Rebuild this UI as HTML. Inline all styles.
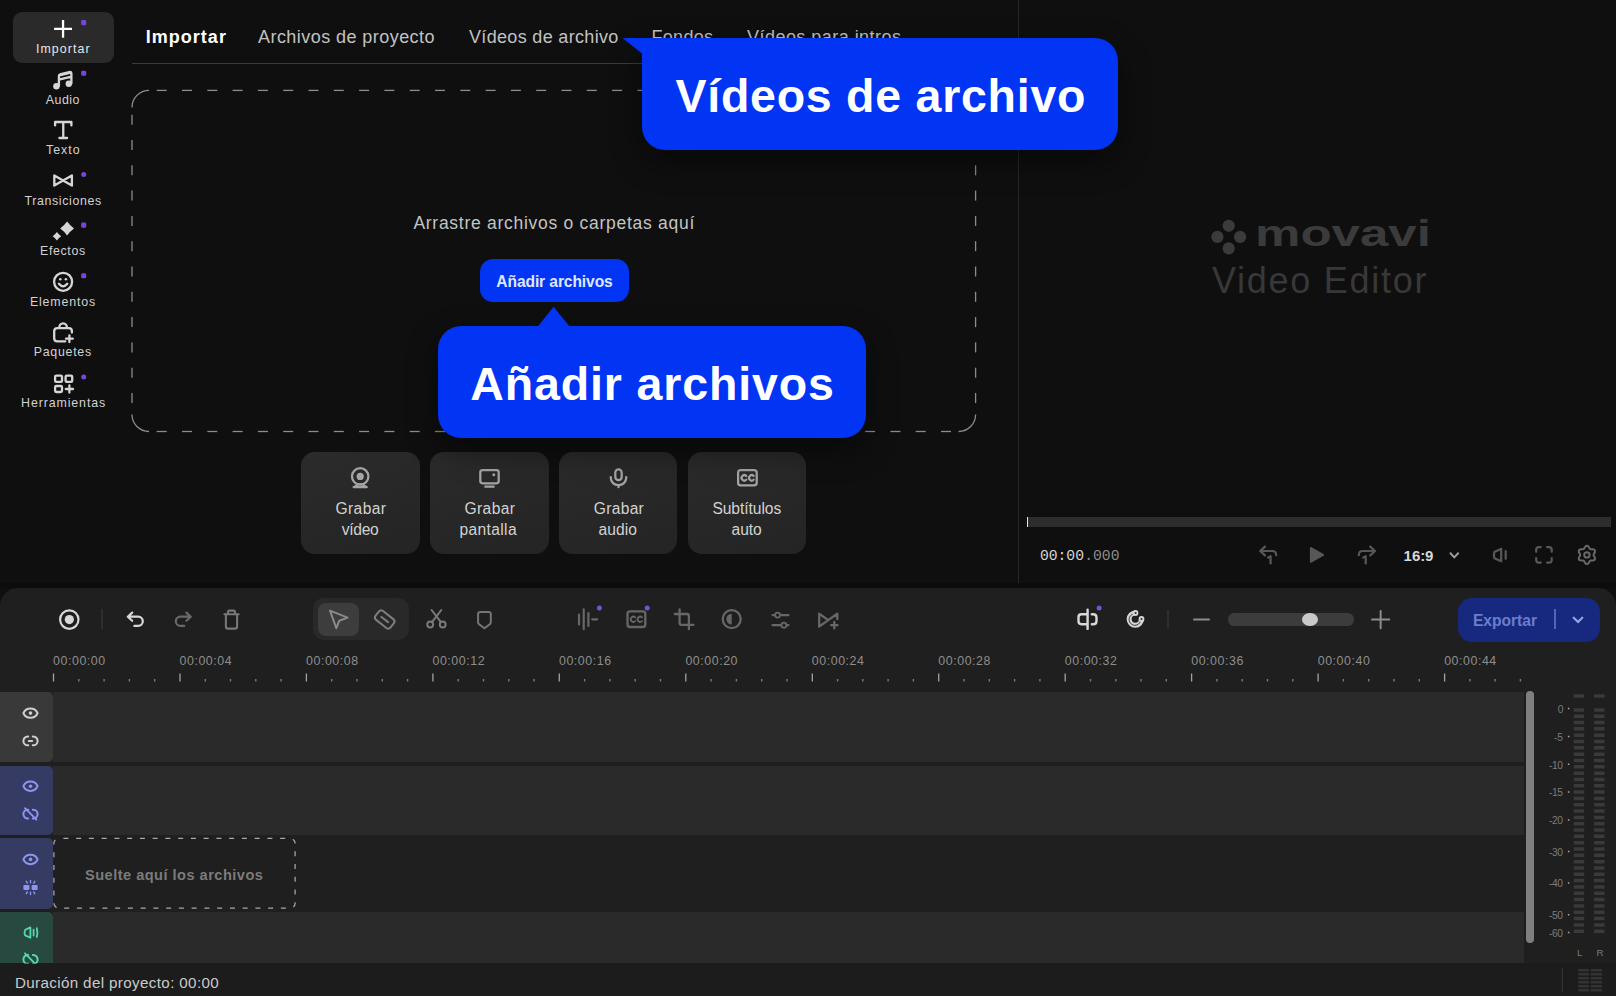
<!DOCTYPE html>
<html lang="es">
<head>
<meta charset="utf-8">
<title>Movavi Video Editor</title>
<style>
*{box-sizing:border-box;margin:0;padding:0}
html,body{width:1616px;height:996px;overflow:hidden;background:#0f0f0f}
body{font-family:"Liberation Sans",sans-serif;position:relative}
.a,.t,svg.i{position:absolute}
.t{white-space:nowrap}
svg{display:block;overflow:visible}
</style>
</head>
<body>
<!-- timeline backgrounds -->
<div class="a" style="left:0px;top:588px;width:1616px;height:408px;background:#1f1f1f;border-radius:18px 18px 0 0;"></div>
<div class="a" style="left:53.4px;top:692.2px;width:1470.4px;height:69.6px;background:#2a2a2a;"></div>
<div class="a" style="left:53.4px;top:765.7px;width:1470.4px;height:69.8px;background:#2a2a2a;"></div>
<div class="a" style="left:53.4px;top:912px;width:1470.4px;height:51.4px;background:#2a2a2a;"></div>
<div class="a" style="left:0px;top:692.2px;width:52.6px;height:69.6px;background:#393939;border-radius:0 5px 5px 0;"></div>
<div class="a" style="left:0px;top:765.7px;width:52.6px;height:69.8px;background:#353b63;border-radius:0 5px 5px 0;"></div>
<div class="a" style="left:0px;top:837.7px;width:52.6px;height:71.2px;background:#353b63;border-radius:0 5px 5px 0;"></div>
<div class="a" style="left:0px;top:912px;width:52.6px;height:51.4px;background:#27493f;border-radius:0 5px 0 0;"></div>
<div class="a" style="left:0px;top:963.4px;width:1616px;height:32.6px;background:#1c1c1c;"></div>
<div class="a" style="left:1526.1px;top:690.8px;width:8px;height:252px;background:#7f7f7f;border-radius:4px;"></div>
<div class="a" style="left:313.4px;top:597.5px;width:96px;height:42.3px;background:#292929;border-radius:11px;"></div>
<div class="a" style="left:318.4px;top:603px;width:40.4px;height:33px;background:#3d3d3d;border-radius:8px;"></div>
<div class="a" style="left:101.4px;top:609.2px;width:1.9px;height:20.1px;background:#2e2e2e;"></div>
<div class="a" style="left:1167px;top:610px;width:1.9px;height:18.3px;background:#2e2e2e;"></div>
<div class="a" style="left:1227.9px;top:613.2px;width:126.2px;height:12.6px;background:#3c3c3c;border-radius:6.3px;"></div>
<div class="a" style="left:1301.9px;top:612.7px;width:15.8px;height:13.6px;background:#c9c9c9;border-radius:50%;"></div>
<div class="a" style="left:1458.1px;top:598px;width:141.7px;height:43.5px;background:#16297f;border-radius:14px;"></div>
<div class="a" style="left:1554.2px;top:609.4px;width:2px;height:19.4px;background:#5165c0;"></div>
<!-- base -->
<div class="a" style="left:0px;top:583px;width:1616px;height:5px;background:#0c0c0c;"></div>
<div class="a" style="left:13px;top:12.4px;width:101px;height:50.6px;background:#2a2a2a;border-radius:9px;"></div>
<div class="a" style="left:131.5px;top:63px;width:887px;height:1px;background:#3b3b3b;"></div>
<div class="a" style="left:1018px;top:0px;width:1.2px;height:583px;background:#282828;"></div>
<div class="t" style="left:145.70px;top:28.00px;font-size:18px;line-height:18px;letter-spacing:1.028px;color:#ffffff;font-weight:bold;">Importar</div>
<div class="t" style="left:258.00px;top:28.00px;font-size:18px;line-height:18px;letter-spacing:0.444px;color:#c2c2c2;">Archivos de proyecto</div>
<div class="t" style="left:469.00px;top:28.00px;font-size:18px;line-height:18px;letter-spacing:0.326px;color:#c2c2c2;">Vídeos de archivo</div>
<div class="t" style="left:651.50px;top:28.00px;font-size:18px;line-height:18px;letter-spacing:0.292px;color:#c2c2c2;">Fondos</div>
<div class="t" style="left:747.00px;top:28.00px;font-size:18px;line-height:18px;letter-spacing:0.466px;color:#c2c2c2;">Vídeos para intros</div>
<div class="t" style="left:413.40px;top:215.00px;font-size:17.5px;line-height:17.5px;letter-spacing:0.725px;color:#c4c4c4;">Arrastre archivos o carpetas aquí</div>
<div class="a" style="left:480.2px;top:259px;width:148.6px;height:42.8px;background:#0234f3;border-radius:13px;"></div>
<div class="t" style="left:496.30px;top:274.00px;font-size:15.6px;line-height:15.6px;letter-spacing:-0.099px;color:#dfe7ff;font-weight:bold;">Añadir archivos</div>
<!-- drop zone -->
<svg class="a" style="left:0;top:0" width="1018" height="450">
<path d="M156.7 90.4h10" stroke="#8c8c8c" stroke-width="1.3" fill="none"/>
<path d="M182.0 90.4h10" stroke="#8c8c8c" stroke-width="1.3" fill="none"/>
<path d="M207.3 90.4h10" stroke="#8c8c8c" stroke-width="1.3" fill="none"/>
<path d="M232.6 90.4h10" stroke="#8c8c8c" stroke-width="1.3" fill="none"/>
<path d="M257.9 90.4h10" stroke="#8c8c8c" stroke-width="1.3" fill="none"/>
<path d="M283.2 90.4h10" stroke="#8c8c8c" stroke-width="1.3" fill="none"/>
<path d="M308.5 90.4h10" stroke="#8c8c8c" stroke-width="1.3" fill="none"/>
<path d="M333.8 90.4h10" stroke="#8c8c8c" stroke-width="1.3" fill="none"/>
<path d="M359.1 90.4h10" stroke="#8c8c8c" stroke-width="1.3" fill="none"/>
<path d="M384.4 90.4h10" stroke="#8c8c8c" stroke-width="1.3" fill="none"/>
<path d="M409.7 90.4h10" stroke="#8c8c8c" stroke-width="1.3" fill="none"/>
<path d="M435.0 90.4h10" stroke="#8c8c8c" stroke-width="1.3" fill="none"/>
<path d="M460.3 90.4h10" stroke="#8c8c8c" stroke-width="1.3" fill="none"/>
<path d="M485.6 90.4h10" stroke="#8c8c8c" stroke-width="1.3" fill="none"/>
<path d="M510.9 90.4h10" stroke="#8c8c8c" stroke-width="1.3" fill="none"/>
<path d="M536.2 90.4h10" stroke="#8c8c8c" stroke-width="1.3" fill="none"/>
<path d="M561.5 90.4h10" stroke="#8c8c8c" stroke-width="1.3" fill="none"/>
<path d="M586.8 90.4h10" stroke="#8c8c8c" stroke-width="1.3" fill="none"/>
<path d="M612.1 90.4h10" stroke="#8c8c8c" stroke-width="1.3" fill="none"/>
<path d="M637.4 90.4h10" stroke="#8c8c8c" stroke-width="1.3" fill="none"/>
<path d="M662.7 90.4h10" stroke="#8c8c8c" stroke-width="1.3" fill="none"/>
<path d="M688.0 90.4h10" stroke="#8c8c8c" stroke-width="1.3" fill="none"/>
<path d="M713.3 90.4h10" stroke="#8c8c8c" stroke-width="1.3" fill="none"/>
<path d="M738.6 90.4h10" stroke="#8c8c8c" stroke-width="1.3" fill="none"/>
<path d="M763.9 90.4h10" stroke="#8c8c8c" stroke-width="1.3" fill="none"/>
<path d="M789.2 90.4h10" stroke="#8c8c8c" stroke-width="1.3" fill="none"/>
<path d="M814.5 90.4h10" stroke="#8c8c8c" stroke-width="1.3" fill="none"/>
<path d="M839.8 90.4h10" stroke="#8c8c8c" stroke-width="1.3" fill="none"/>
<path d="M865.1 90.4h10" stroke="#8c8c8c" stroke-width="1.3" fill="none"/>
<path d="M890.4 90.4h10" stroke="#8c8c8c" stroke-width="1.3" fill="none"/>
<path d="M915.7 90.4h10" stroke="#8c8c8c" stroke-width="1.3" fill="none"/>
<path d="M941.0 90.4h10" stroke="#8c8c8c" stroke-width="1.3" fill="none"/>
<path d="M156.7 431.5h10" stroke="#8c8c8c" stroke-width="1.3" fill="none"/>
<path d="M182.0 431.5h10" stroke="#8c8c8c" stroke-width="1.3" fill="none"/>
<path d="M207.3 431.5h10" stroke="#8c8c8c" stroke-width="1.3" fill="none"/>
<path d="M232.6 431.5h10" stroke="#8c8c8c" stroke-width="1.3" fill="none"/>
<path d="M257.9 431.5h10" stroke="#8c8c8c" stroke-width="1.3" fill="none"/>
<path d="M283.2 431.5h10" stroke="#8c8c8c" stroke-width="1.3" fill="none"/>
<path d="M308.5 431.5h10" stroke="#8c8c8c" stroke-width="1.3" fill="none"/>
<path d="M333.8 431.5h10" stroke="#8c8c8c" stroke-width="1.3" fill="none"/>
<path d="M359.1 431.5h10" stroke="#8c8c8c" stroke-width="1.3" fill="none"/>
<path d="M384.4 431.5h10" stroke="#8c8c8c" stroke-width="1.3" fill="none"/>
<path d="M409.7 431.5h10" stroke="#8c8c8c" stroke-width="1.3" fill="none"/>
<path d="M435.0 431.5h10" stroke="#8c8c8c" stroke-width="1.3" fill="none"/>
<path d="M460.3 431.5h10" stroke="#8c8c8c" stroke-width="1.3" fill="none"/>
<path d="M485.6 431.5h10" stroke="#8c8c8c" stroke-width="1.3" fill="none"/>
<path d="M510.9 431.5h10" stroke="#8c8c8c" stroke-width="1.3" fill="none"/>
<path d="M536.2 431.5h10" stroke="#8c8c8c" stroke-width="1.3" fill="none"/>
<path d="M561.5 431.5h10" stroke="#8c8c8c" stroke-width="1.3" fill="none"/>
<path d="M586.8 431.5h10" stroke="#8c8c8c" stroke-width="1.3" fill="none"/>
<path d="M612.1 431.5h10" stroke="#8c8c8c" stroke-width="1.3" fill="none"/>
<path d="M637.4 431.5h10" stroke="#8c8c8c" stroke-width="1.3" fill="none"/>
<path d="M662.7 431.5h10" stroke="#8c8c8c" stroke-width="1.3" fill="none"/>
<path d="M688.0 431.5h10" stroke="#8c8c8c" stroke-width="1.3" fill="none"/>
<path d="M713.3 431.5h10" stroke="#8c8c8c" stroke-width="1.3" fill="none"/>
<path d="M738.6 431.5h10" stroke="#8c8c8c" stroke-width="1.3" fill="none"/>
<path d="M763.9 431.5h10" stroke="#8c8c8c" stroke-width="1.3" fill="none"/>
<path d="M789.2 431.5h10" stroke="#8c8c8c" stroke-width="1.3" fill="none"/>
<path d="M814.5 431.5h10" stroke="#8c8c8c" stroke-width="1.3" fill="none"/>
<path d="M839.8 431.5h10" stroke="#8c8c8c" stroke-width="1.3" fill="none"/>
<path d="M865.1 431.5h10" stroke="#8c8c8c" stroke-width="1.3" fill="none"/>
<path d="M890.4 431.5h10" stroke="#8c8c8c" stroke-width="1.3" fill="none"/>
<path d="M915.7 431.5h10" stroke="#8c8c8c" stroke-width="1.3" fill="none"/>
<path d="M941.0 431.5h10" stroke="#8c8c8c" stroke-width="1.3" fill="none"/>
<path d="M132 114.7v10" stroke="#8c8c8c" stroke-width="1.3" fill="none"/>
<path d="M132 140.0v10" stroke="#8c8c8c" stroke-width="1.3" fill="none"/>
<path d="M132 165.3v10" stroke="#8c8c8c" stroke-width="1.3" fill="none"/>
<path d="M132 190.6v10" stroke="#8c8c8c" stroke-width="1.3" fill="none"/>
<path d="M132 215.9v10" stroke="#8c8c8c" stroke-width="1.3" fill="none"/>
<path d="M132 241.2v10" stroke="#8c8c8c" stroke-width="1.3" fill="none"/>
<path d="M132 266.5v10" stroke="#8c8c8c" stroke-width="1.3" fill="none"/>
<path d="M132 291.8v10" stroke="#8c8c8c" stroke-width="1.3" fill="none"/>
<path d="M132 317.1v10" stroke="#8c8c8c" stroke-width="1.3" fill="none"/>
<path d="M132 342.4v10" stroke="#8c8c8c" stroke-width="1.3" fill="none"/>
<path d="M132 367.7v10" stroke="#8c8c8c" stroke-width="1.3" fill="none"/>
<path d="M132 393.0v10" stroke="#8c8c8c" stroke-width="1.3" fill="none"/>
<path d="M975.6 114.7v10" stroke="#8c8c8c" stroke-width="1.3" fill="none"/>
<path d="M975.6 140.0v10" stroke="#8c8c8c" stroke-width="1.3" fill="none"/>
<path d="M975.6 165.3v10" stroke="#8c8c8c" stroke-width="1.3" fill="none"/>
<path d="M975.6 190.6v10" stroke="#8c8c8c" stroke-width="1.3" fill="none"/>
<path d="M975.6 215.9v10" stroke="#8c8c8c" stroke-width="1.3" fill="none"/>
<path d="M975.6 241.2v10" stroke="#8c8c8c" stroke-width="1.3" fill="none"/>
<path d="M975.6 266.5v10" stroke="#8c8c8c" stroke-width="1.3" fill="none"/>
<path d="M975.6 291.8v10" stroke="#8c8c8c" stroke-width="1.3" fill="none"/>
<path d="M975.6 317.1v10" stroke="#8c8c8c" stroke-width="1.3" fill="none"/>
<path d="M975.6 342.4v10" stroke="#8c8c8c" stroke-width="1.3" fill="none"/>
<path d="M975.6 367.7v10" stroke="#8c8c8c" stroke-width="1.3" fill="none"/>
<path d="M975.6 393.0v10" stroke="#8c8c8c" stroke-width="1.3" fill="none"/>
<path d="M132 107.4A17 17 0 0 1 149 90.4" stroke="#8c8c8c" stroke-width="1.3" fill="none"/>
<path d="M958.6 90.4A17 17 0 0 1 975.6 107.4" stroke="#8c8c8c" stroke-width="1.3" fill="none"/>
<path d="M975.6 414.5A17 17 0 0 1 958.6 431.5" stroke="#8c8c8c" stroke-width="1.3" fill="none"/>
<path d="M149 431.5A17 17 0 0 1 132 414.5" stroke="#8c8c8c" stroke-width="1.3" fill="none"/>
</svg>
<!-- cards -->
<div class="a" style="left:301.2px;top:452px;width:118.7px;height:101.6px;background:linear-gradient(160deg,#2b2b2b,#242424);border-radius:14px;"></div>
<div class="a" style="left:430px;top:452px;width:118.7px;height:101.6px;background:linear-gradient(160deg,#2b2b2b,#242424);border-radius:14px;"></div>
<div class="a" style="left:558.8px;top:452px;width:118.7px;height:101.6px;background:linear-gradient(160deg,#2b2b2b,#242424);border-radius:14px;"></div>
<div class="a" style="left:687.7px;top:452px;width:118.7px;height:101.6px;background:linear-gradient(160deg,#2b2b2b,#242424);border-radius:14px;"></div>
<div class="t" style="left:335.60px;top:501.00px;font-size:15.6px;line-height:15.6px;letter-spacing:0.352px;color:#d2d2d2;">Grabar</div>
<div class="t" style="left:341.80px;top:522.00px;font-size:15.6px;line-height:15.6px;letter-spacing:-0.319px;color:#d2d2d2;">vídeo</div>
<div class="t" style="left:464.60px;top:501.00px;font-size:15.6px;line-height:15.6px;letter-spacing:0.352px;color:#d2d2d2;">Grabar</div>
<div class="t" style="left:459.40px;top:522.00px;font-size:15.6px;line-height:15.6px;letter-spacing:0.364px;color:#d2d2d2;">pantalla</div>
<div class="t" style="left:593.80px;top:501.00px;font-size:15.6px;line-height:15.6px;letter-spacing:0.292px;color:#d2d2d2;">Grabar</div>
<div class="t" style="left:598.50px;top:522.00px;font-size:15.6px;line-height:15.6px;letter-spacing:0.055px;color:#d2d2d2;">audio</div>
<div class="t" style="left:712.40px;top:501.00px;font-size:15.6px;line-height:15.6px;letter-spacing:-0.061px;color:#d2d2d2;">Subtítulos</div>
<div class="t" style="left:731.60px;top:522.00px;font-size:15.6px;line-height:15.6px;letter-spacing:-0.126px;color:#d2d2d2;">auto</div>
<!-- preview -->
<div class="a" style="left:1027px;top:517.1px;width:584px;height:9.8px;background:#2d2d2d;"></div>
<div class="a" style="left:1026.6px;top:517.1px;width:1.2px;height:9.8px;background:#e6e6e6;"></div>
<div class="t" style="left:1039.90px;top:549.00px;font-size:14.7px;line-height:14.7px;letter-spacing:0.000px;color:#d6d6d6;font-family:&quot;Liberation Mono&quot;,monospace;">00:00</div>
<div class="t" style="left:1084.20px;top:549.00px;font-size:14.7px;line-height:14.7px;letter-spacing:0.000px;color:#8c8c8c;font-family:&quot;Liberation Mono&quot;,monospace;">.000</div>
<div class="t" style="left:1403.60px;top:548.00px;font-size:15px;line-height:15px;letter-spacing:-0.060px;color:#d8d8d8;font-weight:bold;">16:9</div>
<div class="t" style="left:1255.10px;top:216.00px;font-size:36.5px;line-height:36.5px;letter-spacing:0.000px;color:#3b3b3b;font-weight:bold;transform:scaleX(1.3983);transform-origin:0 0;">movavi</div>
<div class="t" style="left:1211.90px;top:263.00px;font-size:36px;line-height:36px;letter-spacing:1.738px;color:#383838;">Video Editor</div>
<!-- sidebar labels -->
<div class="t" style="left:35.90px;top:43.00px;font-size:12.4px;line-height:12.4px;letter-spacing:1.099px;color:#e6e6e6;">Importar</div>
<div class="t" style="left:45.80px;top:94.00px;font-size:12.4px;line-height:12.4px;letter-spacing:0.475px;color:#d2d2d2;">Audio</div>
<div class="t" style="left:46.00px;top:144.00px;font-size:12.4px;line-height:12.4px;letter-spacing:0.994px;color:#d2d2d2;">Texto</div>
<div class="t" style="left:24.40px;top:195.00px;font-size:12.4px;line-height:12.4px;letter-spacing:0.638px;color:#d2d2d2;">Transiciones</div>
<div class="t" style="left:40.10px;top:245.00px;font-size:12.4px;line-height:12.4px;letter-spacing:0.612px;color:#d2d2d2;">Efectos</div>
<div class="t" style="left:29.90px;top:296.00px;font-size:12.4px;line-height:12.4px;letter-spacing:0.832px;color:#d2d2d2;">Elementos</div>
<div class="t" style="left:33.70px;top:346.00px;font-size:12.4px;line-height:12.4px;letter-spacing:0.734px;color:#d2d2d2;">Paquetes</div>
<div class="t" style="left:21.10px;top:397.00px;font-size:12.4px;line-height:12.4px;letter-spacing:0.884px;color:#d2d2d2;">Herramientas</div>
<!-- timeline text -->
<div class="t" style="left:1472.90px;top:613.00px;font-size:15.6px;line-height:15.6px;letter-spacing:0.006px;color:#6b7dcb;font-weight:bold;">Exportar</div>
<div class="t" style="left:53.10px;top:655.00px;font-size:12.4px;line-height:12.4px;letter-spacing:0.551px;color:#8e8e8e;">00:00:00</div>
<div class="t" style="left:179.56px;top:655.00px;font-size:12.4px;line-height:12.4px;letter-spacing:0.551px;color:#8e8e8e;">00:00:04</div>
<div class="t" style="left:306.02px;top:655.00px;font-size:12.4px;line-height:12.4px;letter-spacing:0.551px;color:#8e8e8e;">00:00:08</div>
<div class="t" style="left:432.48px;top:655.00px;font-size:12.4px;line-height:12.4px;letter-spacing:0.551px;color:#8e8e8e;">00:00:12</div>
<div class="t" style="left:558.94px;top:655.00px;font-size:12.4px;line-height:12.4px;letter-spacing:0.551px;color:#8e8e8e;">00:00:16</div>
<div class="t" style="left:685.40px;top:655.00px;font-size:12.4px;line-height:12.4px;letter-spacing:0.551px;color:#8e8e8e;">00:00:20</div>
<div class="t" style="left:811.86px;top:655.00px;font-size:12.4px;line-height:12.4px;letter-spacing:0.551px;color:#8e8e8e;">00:00:24</div>
<div class="t" style="left:938.32px;top:655.00px;font-size:12.4px;line-height:12.4px;letter-spacing:0.551px;color:#8e8e8e;">00:00:28</div>
<div class="t" style="left:1064.78px;top:655.00px;font-size:12.4px;line-height:12.4px;letter-spacing:0.551px;color:#8e8e8e;">00:00:32</div>
<div class="t" style="left:1191.24px;top:655.00px;font-size:12.4px;line-height:12.4px;letter-spacing:0.551px;color:#8e8e8e;">00:00:36</div>
<div class="t" style="left:1317.70px;top:655.00px;font-size:12.4px;line-height:12.4px;letter-spacing:0.551px;color:#8e8e8e;">00:00:40</div>
<div class="t" style="left:1444.16px;top:655.00px;font-size:12.4px;line-height:12.4px;letter-spacing:0.551px;color:#8e8e8e;">00:00:44</div>
<div class="t" style="left:85.00px;top:868.00px;font-size:14.6px;line-height:14.6px;letter-spacing:0.471px;color:#7b7b7b;font-weight:bold;">Suelte aquí los archivos</div>
<div class="t" style="left:14.90px;top:975.00px;font-size:15.2px;line-height:15.2px;letter-spacing:0.358px;color:#cacaca;">Duración del proyecto: 00:00</div>
<div class="t" style="left:1557.80px;top:705.00px;font-size:10.2px;line-height:10.2px;letter-spacing:0.000px;color:#7c7c7c;">0</div>
<div class="t" style="left:1554.00px;top:733.00px;font-size:10.2px;line-height:10.2px;letter-spacing:-0.193px;color:#7c7c7c;">-5</div>
<div class="t" style="left:1549.10px;top:761.00px;font-size:10.2px;line-height:10.2px;letter-spacing:-0.479px;color:#7c7c7c;">-10</div>
<div class="t" style="left:1549.10px;top:788.00px;font-size:10.2px;line-height:10.2px;letter-spacing:-0.479px;color:#7c7c7c;">-15</div>
<div class="t" style="left:1549.10px;top:816.00px;font-size:10.2px;line-height:10.2px;letter-spacing:-0.479px;color:#7c7c7c;">-20</div>
<div class="t" style="left:1549.10px;top:848.00px;font-size:10.2px;line-height:10.2px;letter-spacing:-0.479px;color:#7c7c7c;">-30</div>
<div class="t" style="left:1549.10px;top:879.00px;font-size:10.2px;line-height:10.2px;letter-spacing:-0.479px;color:#7c7c7c;">-40</div>
<div class="t" style="left:1549.10px;top:911.00px;font-size:10.2px;line-height:10.2px;letter-spacing:-0.479px;color:#7c7c7c;">-50</div>
<div class="t" style="left:1549.10px;top:929.00px;font-size:10.2px;line-height:10.2px;letter-spacing:-0.479px;color:#7c7c7c;">-60</div>
<div class="t" style="left:1577.00px;top:948.00px;font-size:9.8px;line-height:9.8px;letter-spacing:0.000px;color:#787878;">L</div>
<div class="t" style="left:1596.40px;top:948.00px;font-size:9.8px;line-height:9.8px;letter-spacing:0.000px;color:#787878;">R</div>
<!-- icons -->
<svg class="a" style="left:0;top:0" width="1616" height="996" viewBox="0 0 1616 996">
<path d="M54.1 28.85H72M63.05 19.9V37.8" stroke="#ffffff" stroke-width="2.3" fill="none"/>
<path d="M58.9 86V76.6Q58.9 74.6 60.9 74.1L69.3 72.1Q71.4 71.6 71.4 73.7V83.4M58.9 79.6L71.4 76.6" stroke="#d6d6d6" stroke-width="2.3" fill="none" stroke-linecap="round" stroke-linejoin="round"/><path d="M59.4 75.4L70.9 72.6" stroke="#d6d6d6" stroke-width="2.3" fill="none" stroke-linecap="round" stroke-linejoin="round" stroke-width="3"/>
<circle cx="56.4" cy="86.3" r="3.2" fill="#d6d6d6"/><circle cx="68.8" cy="83.7" r="3.2" fill="#d6d6d6"/>
<path d="M55.1 125.4V122H71.4V125.4M63.25 122V138M59.4 138H67.1" stroke="#d6d6d6" stroke-width="2.3" fill="none" stroke-linecap="round" stroke-linejoin="round" stroke-linecap="butt"/>
<path d="M54.3 175.4L71.9 185.6V175.4L54.3 185.6Z" stroke="#d6d6d6" stroke-width="2.3" fill="none" stroke-linecap="round" stroke-linejoin="round" stroke-width="2.6"/>
<path d="M67.1 221.6Q69.99799999999999 225.602 74.0 228.5Q69.99799999999999 231.398 67.1 235.4Q64.202 231.398 60.199999999999996 228.5Q64.202 225.602 67.1 221.6Z" fill="#d6d6d6"/><path d="M56.9 232.10000000000002Q58.664 234.536 61.1 236.3Q58.664 238.06400000000002 56.9 240.5Q55.135999999999996 238.06400000000002 52.699999999999996 236.3Q55.135999999999996 234.536 56.9 232.10000000000002Z" fill="#d6d6d6"/>
<circle cx="63.1" cy="281.8" r="9" stroke="#d6d6d6" stroke-width="2.3" fill="none" stroke-linecap="round" stroke-linejoin="round" stroke-width="2.1"/>
<circle cx="60.3" cy="279.3" r="1.3" fill="#d6d6d6"/><circle cx="65.9" cy="279.3" r="1.3" fill="#d6d6d6"/>
<path d="M58.9 283.8Q63.1 288.8 67.3 283.8" stroke="#d6d6d6" stroke-width="2.3" fill="none" stroke-linecap="round" stroke-linejoin="round" stroke-width="1.9"/>
<path d="M65.3 341.3H57.4Q54.2 341.3 54.2 338.2V331.2Q54.2 328.1 57.4 328.1H68.8Q71.9 328.1 71.9 331.2V332.6M59.3 327.6a3.8 4.3 0 0 1 7.6 0M69.4 335.3V342.1M66 338.7H72.8" stroke="#d6d6d6" stroke-width="2.3" fill="none" stroke-linecap="round" stroke-linejoin="round"/>
<rect x="55.1" y="375.6" width="6.9" height="6.3" rx="1.2" stroke="#d6d6d6" stroke-width="2.3" fill="none" stroke-linecap="round" stroke-linejoin="round"/><rect x="65.6" y="375.6" width="6.6" height="6.3" rx="1.2" stroke="#d6d6d6" stroke-width="2.3" fill="none" stroke-linecap="round" stroke-linejoin="round"/><rect x="55.1" y="386" width="6.9" height="6" rx="1.2" stroke="#d6d6d6" stroke-width="2.3" fill="none" stroke-linecap="round" stroke-linejoin="round"/>
<path d="M69.4 385.4V392.6M65.8 389H73" stroke="#d6d6d6" stroke-width="2.3" fill="none" stroke-linecap="round" stroke-linejoin="round"/>
<rect x="81.2" y="20.1" width="5" height="5.1" rx="1.3" fill="#7646dc"/>
<rect x="81.2" y="70.7" width="5" height="5.1" rx="1.3" fill="#7646dc"/>
<rect x="81.2" y="172.0" width="5" height="5.1" rx="2.5" fill="#7646dc"/>
<rect x="81.2" y="222.6" width="5" height="5.1" rx="1.3" fill="#7646dc"/>
<rect x="81.2" y="273.2" width="5" height="5.1" rx="1.3" fill="#7646dc"/>
<rect x="81.2" y="374.5" width="5" height="5.1" rx="2.5" fill="#7646dc"/>
<circle cx="360.2" cy="476.4" r="8.2" stroke="#a4a4a4" stroke-width="2.25" fill="none" stroke-linecap="round" stroke-linejoin="round"/><circle cx="360.2" cy="476.4" r="3.6" fill="#a4a4a4"/>
<path d="M353.6 487H366.8M354.8 486.6Q360.2 481.6 365.6 486.6" stroke="#a4a4a4" stroke-width="2.25" fill="none" stroke-linecap="round" stroke-linejoin="round"/>
<rect x="480.3" y="470.2" width="18.4" height="13.1" rx="2.2" stroke="#a4a4a4" stroke-width="2.25" fill="none" stroke-linecap="round" stroke-linejoin="round"/><path d="M485.3 486.7H493.7" stroke="#a4a4a4" stroke-width="2.25" fill="none" stroke-linecap="round" stroke-linejoin="round"/><circle cx="493.8" cy="474.8" r="1.5" fill="#a4a4a4"/>
<rect x="615.3" y="469.4" width="6.4" height="10.8" rx="3.2" stroke="#a4a4a4" stroke-width="2.25" fill="none" stroke-linecap="round" stroke-linejoin="round"/><path d="M610.8 477V478a7.7 7.2 0 0 0 15.4 0V477M618.5 485.4V487.2" stroke="#a4a4a4" stroke-width="2.25" fill="none" stroke-linecap="round" stroke-linejoin="round"/>
<rect x="738.1" y="470.2" width="18.6" height="15.1" rx="2.6" stroke="#a4a4a4" stroke-width="2.25" fill="none" stroke-linecap="round" stroke-linejoin="round"/>
<path d="M746.2 475.9a2.7 2.7 0 1 0 0 3.9M753.6 475.9a2.7 2.7 0 1 0 0 3.9" stroke="#a4a4a4" stroke-width="2.25" fill="none" stroke-linecap="round" stroke-linejoin="round" stroke-width="1.9"/>
<circle cx="1228.7" cy="225.8" r="6.1" fill="#3b3b3b"/>
<circle cx="1217.4" cy="236.9" r="6.1" fill="#3b3b3b"/>
<circle cx="1240.1" cy="236.9" r="6.1" fill="#3b3b3b"/>
<circle cx="1228.7" cy="248.4" r="6.1" fill="#3b3b3b"/>
<path d="M1265 546.6L1260.2 551L1265 555.4M1260.6 551H1272.2Q1276.2 551 1276.2 555.2" stroke="#585858" stroke-width="2.2" fill="none" stroke-linecap="round" stroke-linejoin="round"/>
<path d="M1268 557.6L1270.6 556.2V563.4" stroke="#585858" stroke-width="2.2" fill="none" stroke-linecap="round" stroke-linejoin="round" stroke-width="2.4" stroke-linecap="butt"/>
<path d="M1311 548.2L1323 554.9L1311 561.6Z" fill="#585858" stroke="#585858" stroke-width="2.2" stroke-linejoin="round"/>
<path d="M1370.2 546.6L1375 551L1370.2 555.4M1374.6 551H1362.8Q1358.8 551 1358.8 555.2" stroke="#585858" stroke-width="2.2" fill="none" stroke-linecap="round" stroke-linejoin="round"/>
<path d="M1363.1 557.6L1365.7 556.2V563.4" stroke="#585858" stroke-width="2.2" fill="none" stroke-linecap="round" stroke-linejoin="round" stroke-width="2.4" stroke-linecap="butt"/>
<path d="M1450.5 553.3L1454.3 557.4L1458.1 553.3" stroke="#9c9c9c" stroke-width="2" fill="none" stroke-linecap="round" stroke-linejoin="round"/>
<path d="M1501.2 548.8V561.3L1494.4 558.2Q1493.3 555 1494.4 551.9Z" stroke="#585858" stroke-width="2.2" fill="none" stroke-linecap="round" stroke-linejoin="round"/><path d="M1505.7 551V558.8" stroke="#585858" stroke-width="2.2" fill="none" stroke-linecap="round" stroke-linejoin="round" stroke-width="2.4"/>
<path d="M1536.2 551.7V549.7Q1536.2 547.1 1538.8 547.1H1540.8M1547.1000000000001 547.1H1549.1000000000001Q1551.7 547.1 1551.7 549.7V551.7M1551.7 558.0V560.0Q1551.7 562.6 1549.1000000000001 562.6H1547.1000000000001M1540.8 562.6H1538.8Q1536.2 562.6 1536.2 560.0V558.0" stroke="#585858" stroke-width="2.2" fill="none" stroke-linecap="round" stroke-linejoin="round"/>
<path d="M1593.55 554.90L1593.69 554.31L1594.06 553.64L1594.53 552.86L1594.91 551.98L1595.04 551.10L1594.82 550.32L1594.26 549.75L1593.43 549.42L1592.49 549.31L1591.58 549.33L1590.81 549.32L1590.23 549.14L1589.78 548.72L1589.39 548.06L1588.94 547.27L1588.38 546.50L1587.68 545.95L1586.90 545.75L1586.12 545.95L1585.42 546.50L1584.86 547.27L1584.41 548.06L1584.02 548.72L1583.58 549.14L1582.99 549.32L1582.22 549.33L1581.31 549.31L1580.37 549.42L1579.54 549.75L1578.98 550.32L1578.76 551.10L1578.89 551.98L1579.27 552.86L1579.74 553.64L1580.11 554.31L1580.25 554.90L1580.11 555.49L1579.74 556.16L1579.27 556.94L1578.89 557.82L1578.76 558.70L1578.98 559.48L1579.54 560.05L1580.37 560.38L1581.31 560.49L1582.22 560.47L1582.99 560.48L1583.58 560.66L1584.02 561.08L1584.41 561.74L1584.86 562.53L1585.42 563.30L1586.12 563.85L1586.90 564.05L1587.68 563.85L1588.38 563.30L1588.94 562.53L1589.39 561.74L1589.78 561.08L1590.23 560.66L1590.81 560.48L1591.58 560.47L1592.49 560.49L1593.43 560.38L1594.26 560.05L1594.82 559.48L1595.04 558.70L1594.91 557.82L1594.53 556.94L1594.06 556.16L1593.69 555.49Z" stroke="#686868" stroke-width="2" fill="none" stroke-linejoin="round"/><circle cx="1586.9" cy="554.9" r="2.7" stroke="#686868" stroke-width="2" fill="none"/>
<circle cx="69.3" cy="619.6" r="9.2" stroke="#d8d8d8" stroke-width="2.2" fill="none" stroke-linecap="round" stroke-linejoin="round"/><circle cx="69.3" cy="619.6" r="4.6" fill="#d8d8d8"/>
<path d="M132.2 612.6L127.8 616.7L132.2 620.8M128.2 616.7H138.2a4.6 4.6 0 0 1 0 9.2H134.4" stroke="#d8d8d8" stroke-width="2.2" fill="none" stroke-linecap="round" stroke-linejoin="round"/>
<path d="M186.4 612.6L190.8 616.7L186.4 620.8M190.4 616.7H180.4a4.6 4.6 0 0 0 0 9.2H184.2" stroke="#696969" stroke-width="2.2" fill="none" stroke-linecap="round" stroke-linejoin="round"/>
<path d="M224.4 614.3H238.6M228 613.6V612Q228 610.6 229.4 610.6H233.6Q235 610.6 235 612V613.6M225.9 614.6V626.4Q225.9 628.6 228.1 628.6H234.9Q237.1 628.6 237.1 626.4V614.6" stroke="#787878" stroke-width="2.1" fill="none" stroke-linecap="round" stroke-linejoin="round"/>
<path d="M330 610.6L347.6 617.6L339.3 620.7L336.3 628.2Z" stroke="#8a8a8a" stroke-width="2" fill="none" stroke-linecap="round" stroke-linejoin="round"/>
<g transform="rotate(38 384.7 619.5)"><rect x="375.2" y="613.9" width="19" height="11.2" rx="3" stroke="#7e7e7e" stroke-width="2" fill="none" stroke-linecap="round" stroke-linejoin="round"/><path d="M380.5 619.5H389" stroke="#7e7e7e" stroke-width="2" fill="none" stroke-linecap="round" stroke-linejoin="round"/></g>
<circle cx="430.2" cy="624.5" r="2.9" stroke="#7a7a7a" stroke-width="2" fill="none" stroke-linecap="round" stroke-linejoin="round"/><circle cx="442.7" cy="624.5" r="2.9" stroke="#7a7a7a" stroke-width="2" fill="none" stroke-linecap="round" stroke-linejoin="round"/><path d="M432 622.2L441.3 610M440.9 622.2L431.6 610" stroke="#7a7a7a" stroke-width="2" fill="none" stroke-linecap="round" stroke-linejoin="round"/>
<path d="M478.1 614.1Q478.1 611.9 480.3 611.9H488.6Q490.8 611.9 490.8 614.1V622.2Q490.8 623.4 489.8 624.2L484.45 628.3L479.1 624.2Q478.1 623.4 478.1 622.2Z" stroke="#767676" stroke-width="2" fill="none" stroke-linecap="round" stroke-linejoin="round"/>
<path d="M579 614.5V624.5M583.7 609.4V629.2M588.4 613V626M592.2 619.3H597.2" stroke="#676767" stroke-width="2.2" fill="none" stroke-linecap="round" stroke-linejoin="round"/>
<rect x="627.5" y="611.4" width="17.8" height="15.6" rx="2.6" stroke="#676767" stroke-width="2.3" fill="none" stroke-linecap="round" stroke-linejoin="round"/><path d="M635.2 617.3a2.6 2.6 0 1 0 0 3.8M642 617.3a2.6 2.6 0 1 0 0 3.8" stroke="#676767" stroke-width="1.8" fill="none" stroke-linecap="round" stroke-linejoin="round"/>
<path d="M679.6 609.4V623Q679.6 624.9 681.5 624.9H693.4M674.8 614H687Q688.9 614 688.9 615.9V629.2" stroke="#676767" stroke-width="2.3" fill="none" stroke-linecap="round" stroke-linejoin="round"/>
<circle cx="731.7" cy="619.1" r="9" stroke="#676767" stroke-width="2.3" fill="none" stroke-linecap="round" stroke-linejoin="round"/><path d="M731.7 613.7A5.4 5.4 0 0 0 731.7 624.5Z" fill="#676767"/>
<path d="M772.6 615.1H774.4M781 615.1H788.4M772.6 625.2H780.6M787.3 625.2H788.4" stroke="#676767" stroke-width="2.3" fill="none" stroke-linecap="round" stroke-linejoin="round"/><circle cx="777.6" cy="615.1" r="2.5" stroke="#676767" stroke-width="1.8" fill="none" stroke-linecap="round" stroke-linejoin="round"/><circle cx="783.9" cy="625.2" r="2.5" stroke="#676767" stroke-width="1.8" fill="none" stroke-linecap="round" stroke-linejoin="round"/>
<path d="M819.2 613.7L828.3 620.1L819.2 626.5ZM828.3 620.1L837.3 613.7V619.2M834.3 622V628.4M831.1 625.2H837.5" stroke="#676767" stroke-width="2.3" fill="none" stroke-linecap="round" stroke-linejoin="round"/>
<circle cx="599.4" cy="608" r="2.5" fill="#6a56d6"/>
<circle cx="647.2" cy="608" r="2.5" fill="#6a56d6"/>
<circle cx="1099.1" cy="607.9" r="2.5" fill="#6a56d6"/>
<path d="M1087.6 609.8V628.9M1087.6 614.3H1081.4Q1078.5 614.3 1078.5 617.2V621.3Q1078.5 624.2 1081.4 624.2H1087.6M1091.8 614.3H1093.2Q1096.5 614.3 1096.5 617.6V620.9Q1096.5 624.2 1093.2 624.2H1091.8" stroke="#d8d8d8" stroke-width="2.4" fill="none" stroke-linecap="round" stroke-linejoin="round" stroke-linecap="butt"/>
<path d="M1135.3 612.9A6.2 6.2 0 1 0 1141.5 619.1" stroke="#d6d6d6" stroke-width="5" fill="none" stroke-linecap="round"/>
<path d="M1134.2 613.6A5.9 5.9 0 1 0 1140.8 620.2" stroke="#3a3a3a" stroke-width="1" fill="none" stroke-linecap="round"/>
<circle cx="1135.5" cy="612.9" r="2.9" fill="#d6d6d6"/><circle cx="1141.5" cy="618.9" r="2.9" fill="#d6d6d6"/><circle cx="1135.6" cy="612.9" r="1" fill="#2a2a2a"/><circle cx="1141.5" cy="618.9" r="1" fill="#2a2a2a"/>
<path d="M1194 619.5H1209" stroke="#8c8c8c" stroke-width="2" fill="none" stroke-linecap="round" stroke-linejoin="round" stroke-linecap="butt"/><path d="M1372 619.6H1389.3M1380.65 611V628.3" stroke="#8c8c8c" stroke-width="2" fill="none" stroke-linecap="round" stroke-linejoin="round" stroke-linecap="butt"/>
<path d="M1573.7 617.7L1578 622.1L1582.3 617.7" stroke="#93a3e6" stroke-width="2.2" fill="none" stroke-linecap="round" stroke-linejoin="round"/>
<path d="M53.5 673.6V681.6M180.0 673.6V681.6M306.4 673.6V681.6M432.9 673.6V681.6M559.3 673.6V681.6M685.8 673.6V681.6M812.3 673.6V681.6M938.7 673.6V681.6M1065.2 673.6V681.6M1191.6 673.6V681.6M1318.1 673.6V681.6M1444.6 673.6V681.6" stroke="#a2a2a2" stroke-width="1.3" fill="none"/>
<path d="M78.8 679V681.6M104.1 679V681.6M129.4 679V681.6M154.7 679V681.6M205.3 679V681.6M230.5 679V681.6M255.8 679V681.6M281.1 679V681.6M331.7 679V681.6M357.0 679V681.6M382.3 679V681.6M407.6 679V681.6M458.2 679V681.6M483.5 679V681.6M508.8 679V681.6M534.0 679V681.6M584.6 679V681.6M609.9 679V681.6M635.2 679V681.6M660.5 679V681.6M711.1 679V681.6M736.4 679V681.6M761.7 679V681.6M787.0 679V681.6M837.6 679V681.6M862.8 679V681.6M888.1 679V681.6M913.4 679V681.6M964.0 679V681.6M989.3 679V681.6M1014.6 679V681.6M1039.9 679V681.6M1090.5 679V681.6M1115.8 679V681.6M1141.1 679V681.6M1166.3 679V681.6M1216.9 679V681.6M1242.2 679V681.6M1267.5 679V681.6M1292.8 679V681.6M1343.4 679V681.6M1368.7 679V681.6M1394.0 679V681.6M1419.3 679V681.6M1469.9 679V681.6M1495.1 679V681.6M1520.4 679V681.6" stroke="#7a7a7a" stroke-width="1.4" fill="none"/>
<rect x="53.9" y="838.4" width="241.2" height="69.8" rx="5" stroke="#a8a8a8" stroke-width="1.25" fill="none" stroke-dasharray="5 7.75" stroke-dashoffset="-4.5"/>
<path d="M1573.8 695.9h10.4M1573.8 709.90h10.4M1573.8 716.22h10.4M1573.8 722.55h10.4M1573.8 728.87h10.4M1573.8 735.19h10.4M1573.8 741.51h10.4M1573.8 747.84h10.4M1573.8 754.16h10.4M1573.8 760.48h10.4M1573.8 766.81h10.4M1573.8 773.13h10.4M1573.8 779.45h10.4M1573.8 785.78h10.4M1573.8 792.10h10.4M1573.8 798.42h10.4M1573.8 804.75h10.4M1573.8 811.07h10.4M1573.8 817.39h10.4M1573.8 823.71h10.4M1573.8 830.04h10.4M1573.8 836.36h10.4M1573.8 842.68h10.4M1573.8 849.01h10.4M1573.8 855.33h10.4M1573.8 861.65h10.4M1573.8 867.98h10.4M1573.8 874.30h10.4M1573.8 880.62h10.4M1573.8 886.94h10.4M1573.8 893.27h10.4M1573.8 899.59h10.4M1573.8 905.91h10.4M1573.8 912.24h10.4M1573.8 918.56h10.4M1573.8 924.88h10.4M1573.8 931.20h10.4M1594.1 695.9h10.4M1594.1 709.90h10.4M1594.1 716.22h10.4M1594.1 722.55h10.4M1594.1 728.87h10.4M1594.1 735.19h10.4M1594.1 741.51h10.4M1594.1 747.84h10.4M1594.1 754.16h10.4M1594.1 760.48h10.4M1594.1 766.81h10.4M1594.1 773.13h10.4M1594.1 779.45h10.4M1594.1 785.78h10.4M1594.1 792.10h10.4M1594.1 798.42h10.4M1594.1 804.75h10.4M1594.1 811.07h10.4M1594.1 817.39h10.4M1594.1 823.71h10.4M1594.1 830.04h10.4M1594.1 836.36h10.4M1594.1 842.68h10.4M1594.1 849.01h10.4M1594.1 855.33h10.4M1594.1 861.65h10.4M1594.1 867.98h10.4M1594.1 874.30h10.4M1594.1 880.62h10.4M1594.1 886.94h10.4M1594.1 893.27h10.4M1594.1 899.59h10.4M1594.1 905.91h10.4M1594.1 912.24h10.4M1594.1 918.56h10.4M1594.1 924.88h10.4M1594.1 931.20h10.4" stroke="#3a3a3a" stroke-width="3.5" fill="none"/>
<path d="M1567.9 708.4h1.5M1567.9 736.4h1.5M1567.9 764.3h1.5M1567.9 792.0h1.5M1567.9 819.9h1.5M1567.9 851.6h1.5M1567.9 883.0h1.5M1567.9 914.7h1.5M1567.9 932.4h1.5" stroke="#a8a8a8" stroke-width="1.5" fill="none"/>
<path d="M1562.4 968V992" stroke="#333" stroke-width="1.2"/>
<path d="M1578.2 970.2h10.8M1590.6 970.2h11.4M1578.2 974.2h10.8M1590.6 974.2h11.4M1578.2 978.2h10.8M1590.6 978.2h11.4M1578.2 982.2h10.8M1590.6 982.2h11.4M1578.2 986.2h10.8M1590.6 986.2h11.4M1578.2 990.2h10.8M1590.6 990.2h11.4" stroke="#333333" stroke-width="2.4" fill="none"/>
<path d="M23.4 713.1C26 706.8000000000001 35 706.8000000000001 37.6 713.1C35 719.4 26 719.4 23.4 713.1Z" stroke="#d0d0d0" stroke-width="2" fill="none" stroke-linecap="round" stroke-linejoin="round"/><circle cx="30.5" cy="713.1" r="1.8" fill="#d0d0d0"/>
<path d="M28.2 736.5H27.8a4.4 4.4 0 0 0 0 8.8H28.2M32.8 736.5H33.2a4.4 4.4 0 0 1 0 8.8H32.8" stroke="#d0d0d0" stroke-width="2" fill="none" stroke-linecap="round" stroke-linejoin="round"/><path d="M28.8 740.9H32.2" stroke="#d0d0d0" stroke-width="2" fill="none" stroke-linecap="round" stroke-linejoin="round"/>
<path d="M23.4 786.2C26 779.9000000000001 35 779.9000000000001 37.6 786.2C35 792.5 26 792.5 23.4 786.2Z" stroke="#8e95f0" stroke-width="2" fill="none" stroke-linecap="round" stroke-linejoin="round"/><circle cx="30.5" cy="786.2" r="1.8" fill="#8e95f0"/>
<path d="M28.2 809.7H27.8a4.4 4.4 0 0 0 0 8.8H28.2M32.8 809.7H33.2a4.4 4.4 0 0 1 0 8.8H32.8" stroke="#8e95f0" stroke-width="2" fill="none" stroke-linecap="round" stroke-linejoin="round"/><path d="M25 808.1L36.4 819.7" stroke="#8e95f0" stroke-width="1.8" fill="none" stroke-linecap="round" stroke-linejoin="round"/>
<path d="M23.4 859.4C26 853.1 35 853.1 37.6 859.4C35 865.6999999999999 26 865.6999999999999 23.4 859.4Z" stroke="#8e95f0" stroke-width="2" fill="none" stroke-linecap="round" stroke-linejoin="round"/><circle cx="30.5" cy="859.4" r="1.8" fill="#8e95f0"/>
<rect x="23.4" y="885.1" width="6" height="4.8" rx="1" fill="#8e95f0"/><rect x="31.6" y="885.1" width="6" height="4.8" rx="1" fill="#8e95f0"/>
<path d="M30.5 880.5V882.7M30.5 892.3V894.5M26.3 881.3L27.3 883.1M34.7 881.3L33.7 883.1M26.3 893.7L27.3 891.9M34.7 893.7L33.7 891.9" stroke="#8e95f0" stroke-width="1.4" fill="none" stroke-linecap="round" stroke-linejoin="round"/>
<path d="M30.4 927.4V937.8000000000001L25.2 935.4Q23.8 932.6 25.2 929.8000000000001Z" stroke="#56d8ac" stroke-width="1.8" fill="none" stroke-linecap="round" stroke-linejoin="round"/><path d="M33.6 929.6V935.6M36.8 928.2Q38 932.6 36.8 937.0" stroke="#56d8ac" stroke-width="1.8" fill="none" stroke-linecap="round" stroke-linejoin="round"/>
<clipPath id="cl4"><rect x="0" y="940" width="60" height="23.4"/></clipPath><g clip-path="url(#cl4)"><path d="M28.2 955.0H27.8a4.4 4.4 0 0 0 0 8.8H28.2M32.8 955.0H33.2a4.4 4.4 0 0 1 0 8.8H32.8" stroke="#56d8ac" stroke-width="2" fill="none" stroke-linecap="round" stroke-linejoin="round"/><path d="M25 953.4L36.4 965.0" stroke="#56d8ac" stroke-width="1.8" fill="none" stroke-linecap="round" stroke-linejoin="round"/></g>
</svg>
<!-- callouts -->
<div class="a" style="left:642px;top:38px;width:476px;height:112px;background:#0234f3;border-radius:0 23px 23px 23px;box-shadow:0 12px 30px 2px rgba(0,0,0,.42);"></div>
<svg class="a" style="left:0;top:0" width="700" height="80"><path d="M622.5 38H650V60H642V53.5Z" fill="#0234f3"/></svg>
<div class="t" style="left:675.50px;top:73.00px;font-size:46.5px;line-height:46.5px;letter-spacing:0.746px;color:#ffffff;font-weight:bold;">Vídeos de archivo</div>
<div class="a" style="left:438px;top:326px;width:428px;height:111.8px;background:#0234f3;border-radius:23px;box-shadow:0 12px 30px 2px rgba(0,0,0,.42);"></div>
<svg class="a" style="left:0;top:0" width="700" height="340"><path d="M537.4 327L553.6 306.8L570 327Z" fill="#0234f3"/></svg>
<div class="t" style="left:470.20px;top:361.00px;font-size:46.5px;line-height:46.5px;letter-spacing:0.872px;color:#ffffff;font-weight:bold;">Añadir archivos</div>
</body>
</html>
